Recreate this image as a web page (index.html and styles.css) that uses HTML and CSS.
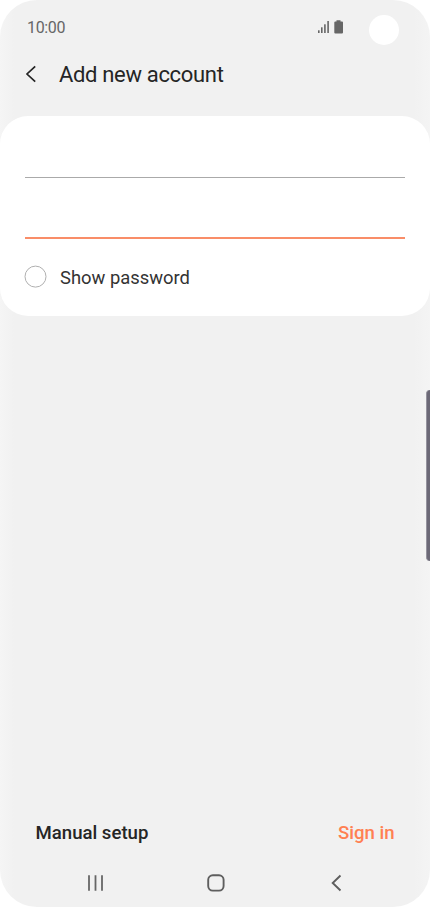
FILE: index.html
```html
<!DOCTYPE html>
<html lang="en">
<head>
  <meta charset="UTF-8" />
  <meta name="viewport" content="width=device-width, initial-scale=1.0">
  <title>Add new account</title>
  <link rel="stylesheet" href="styles.css">
</head>
<body>
  <div class="screen">
    <div class="status-bar">
      <span class="time">10:00</span>
      <svg class="status-icons" width="26" height="14" viewBox="0 0 26 14" fill="#666">
        <rect x="0" y="10.3" width="1.6" height="2.7" />
        <rect x="3" y="7.3" width="1.6" height="5.7" />
        <rect x="6.1" y="4.3" width="1.6" height="8.7" />
        <rect x="9.3" y="1" width="1.6" height="12" />
        <path d="M18.500 0.200h4v1.300h1.500a1 1 0 0 1 1 1v10a1 1 0 0 1-1 1h-6.700a1 1 0 0 1-1-1v-10a1 1 0 0 1 1-1h1.200z" />
      </svg>
      <span class="camera"></span>
    </div>

    <header class="header">
      <svg class="back" width="12" height="18" viewBox="0 0 12 18" fill="none" stroke="#252525" stroke-width="1.7">
        <path d="M10.200 1.300L2 9l8.200 7.700" />
      </svg>
      <h1>Add new account</h1>
    </header>

    <form class="card">
      <input type="text" class="field" aria-label="Email">
      <input type="password" class="field active" aria-label="Password">
      <label class="show-password">
        <svg class="check" width="24" height="24" viewBox="0 0 24 24" fill="none" stroke="#b0b0b0">
          <circle cx="11.500" cy="11.600" r="10.500" />
        </svg>
        <span>Show password</span>
      </label>
    </form>

    <div class="actions">
      <button type="button" class="manual">Manual setup</button>
      <button type="button" class="sign-in">Sign in</button>
    </div>

    <nav class="nav-bar">
      <svg width="18" height="18" viewBox="0 0 18 18" stroke="#666" stroke-width="1.8">
        <path d="M3 1.200v15.600M9.500 1.200v15.600M16 1.200v15.600" />
      </svg>
      <svg width="18" height="18" viewBox="0 0 18 18" fill="none" stroke="#5e5e5e" stroke-width="1.900">
        <rect x="1.200" y="1.200" width="15.400" height="15.400" rx="4.600" />
      </svg>
      <svg width="18" height="18" viewBox="0 0 18 18" fill="none" stroke="#5e5e5e" stroke-width="1.900">
        <path d="M13.500 1.500L5.700 9l7.800 7.500" />
      </svg>
    </nav>

    <span class="edge-handle"></span>
  </div>
</body>
</html>
```

FILE: styles.css
```css
* {
  margin: 0;
  padding: 0;
  box-sizing: border-box;
  font-family: Roboto, sans-serif;
}

body {
  background: #fff;
}

.screen {
  position: relative;
  display: flex;
  flex-direction: column;
  width: 430px;
  height: 907px;
  border-radius: 37px;
  overflow: hidden;
  background: linear-gradient(90deg, #f5f5f5, #f1f1f1 14px, #f1f1f1 414px, #f4f4f4);
}

.status-bar {
  display: flex;
  align-items: center;
  height: 54px;
  padding: 0 31px 0 27px;
}

.time {
  flex: 1;
  padding-top: 1px;
  font-size: 16px;
  letter-spacing: -0.35px;
  color: #666;
}

.camera {
  width: 30px;
  height: 30px;
  margin: 6px 0 0 25px;
  border-radius: 50%;
  background: #fff;
}

.header {
  display: flex;
  align-items: center;
  height: 62px;
  padding: 0 25px 22px;
}

h1 {
  margin-left: 22px;
  font-size: 22px;
  font-weight: 400;
  letter-spacing: -0.33px;
  color: #252525;
}

.card {
  height: 200px;
  padding: 0 25px;
  border-radius: 28px;
  background: #fff;
}

.field {
  display: block;
  width: 100%;
  height: 62px;
  border: none;
  border-bottom: 1px solid #aaa;
  outline: none;
  background: none;
  font-size: 18px;
}

.field.active {
  height: 61px;
  border-bottom: 2px solid #f98d68;
}

.show-password {
  display: flex;
  gap: 12px;
  margin: 26px 0 0 -1px;
  font-size: 18.4px;
  line-height: 26px;
  color: #333;
}

.actions {
  display: flex;
  justify-content: space-between;
  margin-top: auto;
  padding: 0 35.5px;
}

button {
  border: none;
  background: none;
  font-size: 18.6px;
  font-weight: 500;
  line-height: 24px;
  color: #252525;
}

.sign-in {
  color: #ff8052;
}

.nav-bar {
  display: flex;
  justify-content: space-between;
  margin: 29px 85px 15px 86px;
}

.edge-handle {
  position: absolute;
  top: 390px;
  right: 0;
  width: 4px;
  height: 171px;
  border-left: 1px solid #95939e;
  border-radius: 4px 0 0 4px;
  background: #6c6977;
}
```
